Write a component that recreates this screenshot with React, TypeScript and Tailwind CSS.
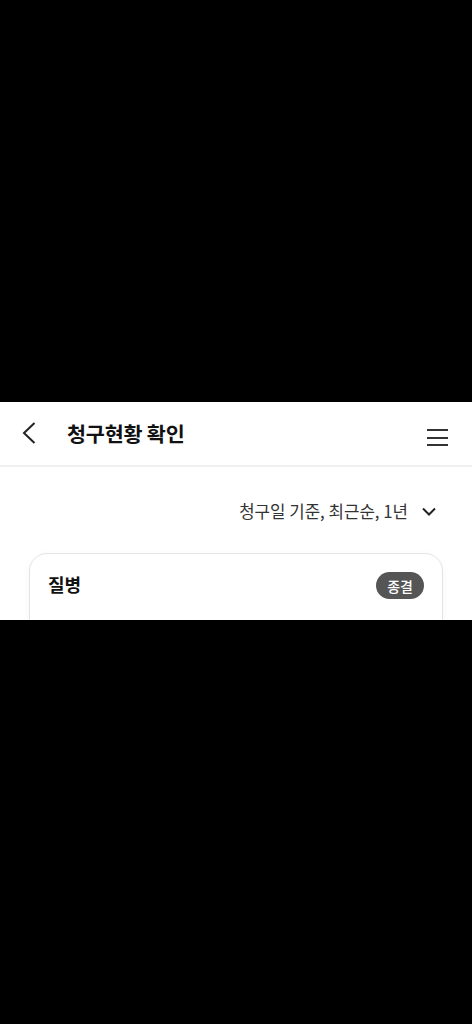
import React from "react";

export default function App() {
  return (
    <div
      className="w-full h-[1024px] bg-black flex flex-col"
      style={{ fontFamily: '"Noto Sans CJK KR", "Noto Sans", sans-serif' }}
    >
      <div className="h-[402px] shrink-0 bg-black" />
      <div className="h-[218px] shrink-0 bg-white overflow-hidden flex flex-col">
        {/* Header */}
        <div className="h-[65px] shrink-0 flex items-center border-b-2 border-[#f0f0f0] pl-[22px] pr-[24px]">
          <svg width="14" height="22" viewBox="0 0 14 22" className="shrink-0 -mt-[1px]">
            <path d="M12.5 1 L2 11 L12.5 21" fill="none" stroke="#222" strokeWidth="2" strokeLinejoin="miter" />
          </svg>
          <div className="ml-[31px] text-[20.7px] leading-[24px] font-bold text-[#111] tracking-[-0.2px] -mt-[1px]">
            청구현황 확인
          </div>
          <div className="flex-1" />
          <div className="flex flex-col gap-[5.5px] w-[21px] mt-[8px]">
            <div className="h-[2px] bg-[#333]" />
            <div className="h-[2px] bg-[#333]" />
            <div className="h-[2px] bg-[#333]" />
          </div>
        </div>
        {/* Filter */}
        <div className="pt-[34px] flex justify-end items-center pr-[36px]">
          <span className="text-[16.8px] leading-[20px] text-[#333]">청구일 기준, 최근순, 1년</span>
          <svg width="14" height="9" viewBox="0 0 14 9" className="ml-[14px]">
            <path d="M1 1.5 L7 7.5 L13 1.5" fill="none" stroke="#222" strokeWidth="2" />
          </svg>
        </div>
        {/* Card */}
        <div className="mt-[32px] mx-[29px] border border-[#e4e4e4] rounded-[18px] shadow-[0_2px_8px_rgba(0,0,0,0.04)] h-[200px] shrink-0">
          <div className="flex items-center justify-between pl-[18px] pr-[18px] pt-[18px]">
            <span className="text-[18px] leading-[27px] font-bold text-[#111] -mt-[2px]">질병</span>
            <span className="h-[27px] px-[11px] rounded-full bg-[#555] text-white text-[14px] font-medium flex items-center leading-none">
              종결
            </span>
          </div>
        </div>
      </div>
      <div className="flex-1 bg-black" />
    </div>
  );
}
